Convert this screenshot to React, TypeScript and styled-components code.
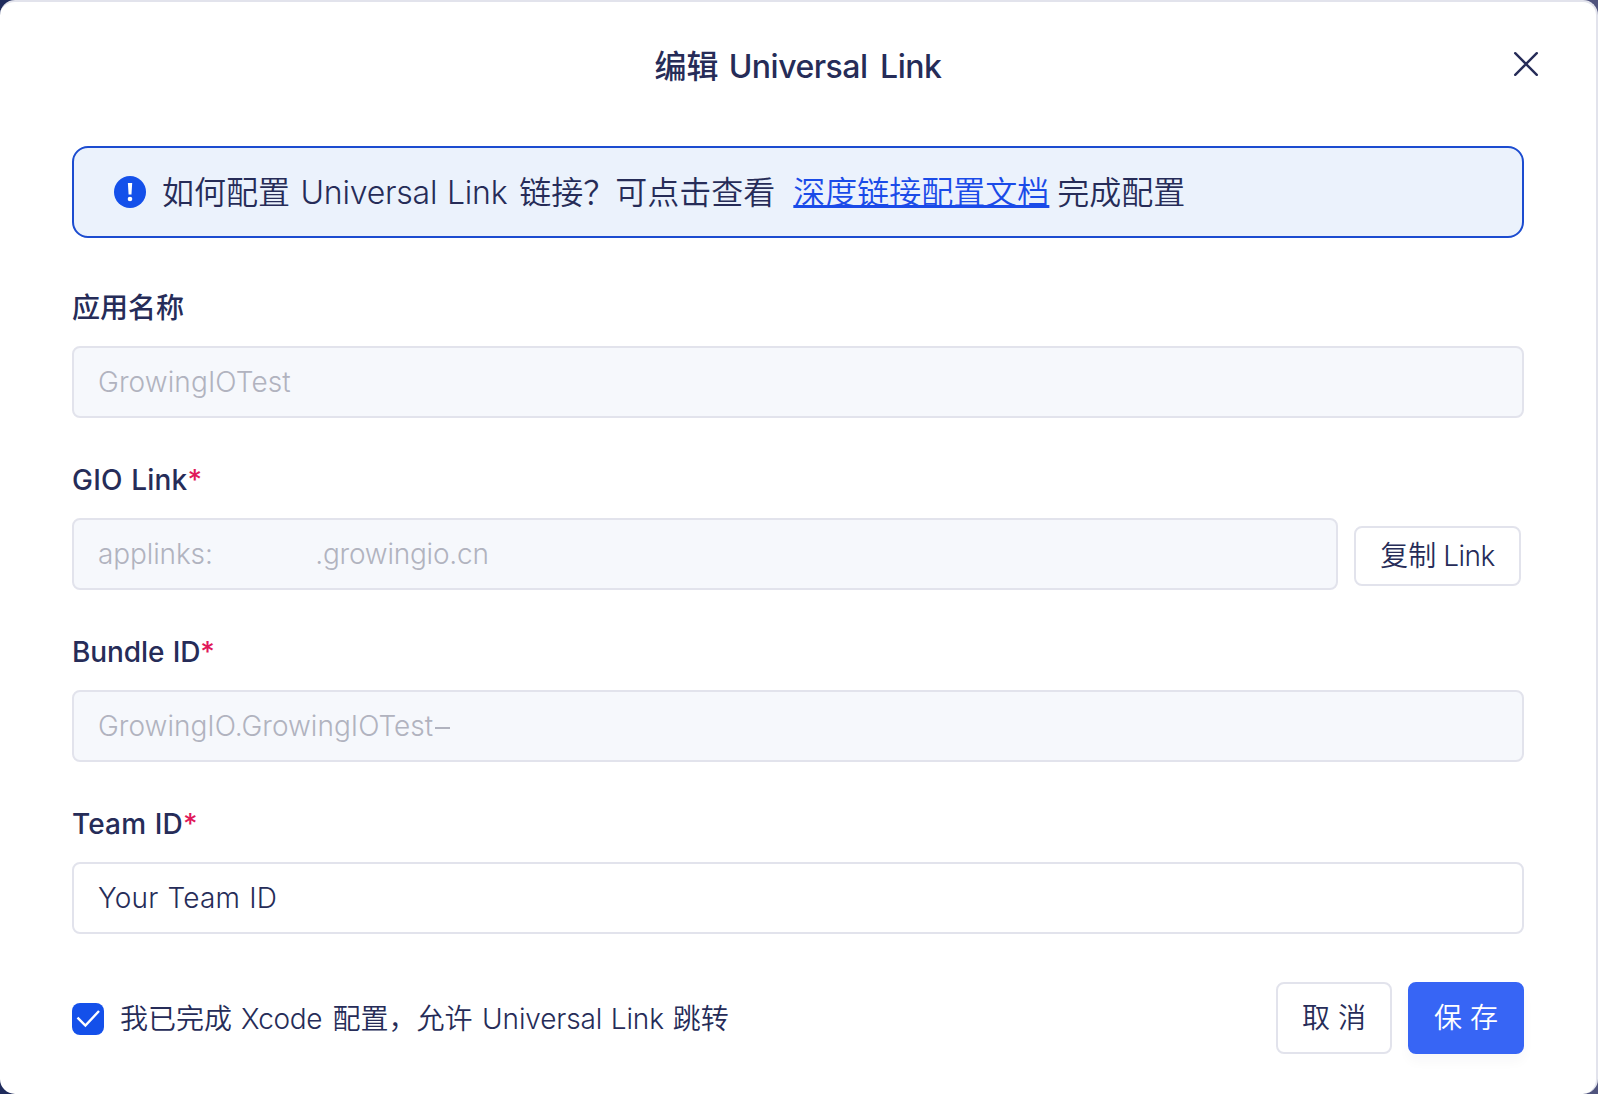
import React, { useState } from "react";
import styled, { createGlobalStyle, css } from "styled-components";

const ink = "#262c58";
const line = "#e2e3ec";

const GlobalStyle = createGlobalStyle`
  *, *::before, *::after { box-sizing: border-box; }
  html, body, #root { height: 100%; }
  body {
    margin: 0;
    overflow: hidden;
    background: linear-gradient(90deg, #1f2b5c, #50547e);
    color: ${ink};
    font-family: Inter, "Noto Sans CJK SC", sans-serif;
    font-weight: 350;
  }
  button, input { font: inherit; color: inherit; }
`;

const Dialog = styled.section`
  display: flex;
  flex-direction: column;
  width: 100%;
  height: 100%;
  padding: 0 72px;
  border: solid ${line};
  border-width: 2px 2px 0 0;
  border-radius: 15px;
  background: #fff;
`;

const Header = styled.header`
  display: grid;
  grid-template-columns: 1fr auto 1fr;
  align-items: center;
  height: 128px;
  margin-bottom: 16px;
`;

const Title = styled.h1`
  grid-column: 2;
  margin: 2px 0 0;
  font-size: 32px;
  font-weight: 500;
  line-height: 48px;
`;

const CloseButton = styled.button`
  display: flex;
  justify-self: end;
  margin: 0 -15px 4px 0;
  padding: 0;
  border: 0;
  background: none;
`;

/* Latin run inside mixed text: tracking, word gap and side margins are set per run. */
const Latin = styled.span<{
  $track?: number;
  $word?: number;
  $left?: number;
  $right?: number;
  $weight?: number;
}>`
  letter-spacing: ${(p) => p.$track ?? 0}px;
  word-spacing: ${(p) => p.$word ?? 0}px;
  margin-left: ${(p) => p.$left ?? 0}px;
  margin-right: ${(p) => p.$right ?? 0}px;
  font-weight: ${(p) => p.$weight ?? "inherit"};
`;

const Notice = styled.div`
  display: flex;
  align-items: center;
  flex: none;
  height: 92px;
  padding-left: 40px;
  border: 2px solid #1c4cd0;
  border-radius: 16px;
  background: #ebf2fc;
  font-size: 32px;
  line-height: 48px;
  white-space: nowrap;
`;

const NoticeText = styled.p`
  margin: 1px 0 0 16px;
`;

const DocLink = styled.a`
  margin: 0 8px 0 18px;
  color: #1a4be8;
  text-decoration: underline;
  text-decoration-thickness: 3px;
  text-underline-offset: 1px;
  text-decoration-skip-ink: none;
`;

const Form = styled.form`
  display: flex;
  flex-direction: column;
  flex: 1;
`;

const Field = styled.div`
  display: flex;
  flex-direction: column;
  height: 172px;
  padding-top: 40px;

  &:first-child { margin-top: 8px; }
`;

const Label = styled.label`
  height: 60px;
  font-size: 28px;
  font-weight: 500;
  line-height: 44px;
`;

const Required = styled.span`
  color: #e0195a;
  font-weight: 450;
`;

const Control = styled.div`
  display: flex;
  align-items: center;
  gap: 16px;
`;

const InputBox = styled.div<{ $disabled?: boolean; $track?: number; $word?: number }>`
  display: flex;
  align-items: center;
  flex: 1;
  min-width: 0;
  height: 72px;
  padding: 0 24px;
  border: 2px solid ${line};
  border-radius: 8px;
  background: #fff;
  font-size: 28px;
  line-height: 44px;
  letter-spacing: ${(p) => p.$track ?? 0}px;
  word-spacing: ${(p) => p.$word ?? 0}px;
  white-space: nowrap;
  ${(p) =>
    p.$disabled &&
    css`
      background: #f6f8fc;
      color: #b1b3bf;
    `}
`;

const Dash = styled.i`
  width: 15px;
  height: 2px;
  margin: 4px 0 0 2px;
  background: currentColor;
`;

const buttonBase = css`
  display: flex;
  align-items: center;
  justify-content: center;
  flex: none;
  padding: 0;
  border: 2px solid ${line};
  border-radius: 8px;
  background: #fff;
  font-size: 28px;
  line-height: 44px;
  white-space: nowrap;
`;

const CopyButton = styled.button`
  ${buttonBase}
  width: 167px;
  height: 60px;
  margin: 4px 3px 0 0;
`;

const ActionButton = styled.button<{ $primary?: boolean }>`
  ${buttonBase}
  gap: 8px;
  width: 116px;
  height: 72px;
  ${(p) =>
    p.$primary &&
    css`
      border-color: #3765f5;
      background: #3765f5;
      color: #fff;
      box-shadow: 0 8px 12px rgba(20, 20, 60, 0.03);
    `}
`;

const Footer = styled.footer`
  display: flex;
  align-items: center;
  justify-content: space-between;
  height: 72px;
  margin-top: 48px;
`;

const Actions = styled.div`
  display: flex;
  gap: 16px;
`;

const CheckRow = styled.div`
  display: flex;
  align-items: center;
  gap: 16px;
  padding-top: 2px;
  font-size: 28px;
  line-height: 44px;
  white-space: nowrap;
`;

const CheckBox = styled.button`
  display: flex;
  width: 32px;
  height: 32px;
  padding: 0;
  border: 0;
  border-radius: 8px;
  background: #1450ea;
`;

function CloseIcon() {
  return (
    <svg width="26" height="26" viewBox="0 0 26 26" fill="none" stroke={ink} strokeWidth="2.4" strokeLinecap="round">
      <path d="M2.2 2.2 23.8 23.8M23.8 2.2 2.2 23.8" />
    </svg>
  );
}

function InfoIcon() {
  return (
    <svg width="32" height="32" viewBox="0 0 32 32">
      <circle cx="16" cy="16" r="16" fill="#1450ea" />
      <path d="M13.9 7h4.3l-.7 11.6h-2.9z" fill="#fff" />
      <circle cx="16" cy="23" r="2.3" fill="#fff" />
    </svg>
  );
}

function CheckIcon() {
  return (
    <svg width="32" height="32" viewBox="0 0 32 32" fill="none" stroke="#fff" strokeWidth="2.4">
      <path d="M5.5 14.6 13.4 22.6 27 8" />
    </svg>
  );
}

export default function App() {
  const [checked, setChecked] = useState(true);
  return (
    <>
      <GlobalStyle />
      <Dialog role="dialog">
        <Header>
          <Title>
            编辑<Latin $track={-0.5} $word={4.5} $left={10}>Universal Link</Latin>
          </Title>
          <CloseButton type="button" aria-label="关闭">
            <CloseIcon />
          </CloseButton>
        </Header>

        <Notice>
          <InfoIcon />
          <NoticeText>
            如何配置<Latin $track={-0.22} $word={1} $left={10.5} $right={12}>Universal Link</Latin>链接？可点击查看
            <DocLink>深度链接配置文档</DocLink>完成配置
          </NoticeText>
        </Notice>

        <Form>
          <Field>
            <Label>应用名称</Label>
            <Control>
              <InputBox $disabled $track={0.1}>GrowingIOTest</InputBox>
            </Control>
          </Field>
          <Field>
            <Label>
              <Latin $track={0.2} $word={1} $weight={450}>GIO Link</Latin>
              <Required>*</Required>
            </Label>
            <Control>
              <InputBox $disabled>
                <Latin $track={-0.12} $right={102.5}>applinks:</Latin>
                <Latin $track={-0.22}>.growingio.cn</Latin>
              </InputBox>
              <CopyButton type="button">
                复制<Latin $track={-0.5} $left={7}>Link</Latin>
              </CopyButton>
            </Control>
          </Field>
          <Field>
            <Label>
              <Latin $track={-0.1} $word={1} $weight={450}>Bundle ID</Latin>
              <Required>*</Required>
            </Label>
            <Control>
              <InputBox $disabled $track={0.02}>
                GrowingIO.GrowingIOTest
                <Dash />
              </InputBox>
            </Control>
          </Field>
          <Field>
            <Label>
              <Latin $track={0.15} $word={1} $weight={450}>Team ID</Latin>
              <Required>*</Required>
            </Label>
            <Control>
              <InputBox $track={0.2} $word={1}>Your Team ID</InputBox>
            </Control>
          </Field>

          <Footer>
            <CheckRow>
              <CheckBox type="button" role="checkbox" aria-checked={checked} onClick={() => setChecked(!checked)}>
                {checked && <CheckIcon />}
              </CheckBox>
              <span>
                我已完成<Latin $track={-0.4} $left={9} $right={10.5}>Xcode</Latin>配置，允许
                <Latin $track={-0.15} $word={1} $left={9.5} $right={9}>Universal Link</Latin>跳转
              </span>
            </CheckRow>
            <Actions>
              <ActionButton type="button">
                <span>取</span>
                <span>消</span>
              </ActionButton>
              <ActionButton type="submit" $primary>
                <span>保</span>
                <span>存</span>
              </ActionButton>
            </Actions>
          </Footer>
        </Form>
      </Dialog>
    </>
  );
}
